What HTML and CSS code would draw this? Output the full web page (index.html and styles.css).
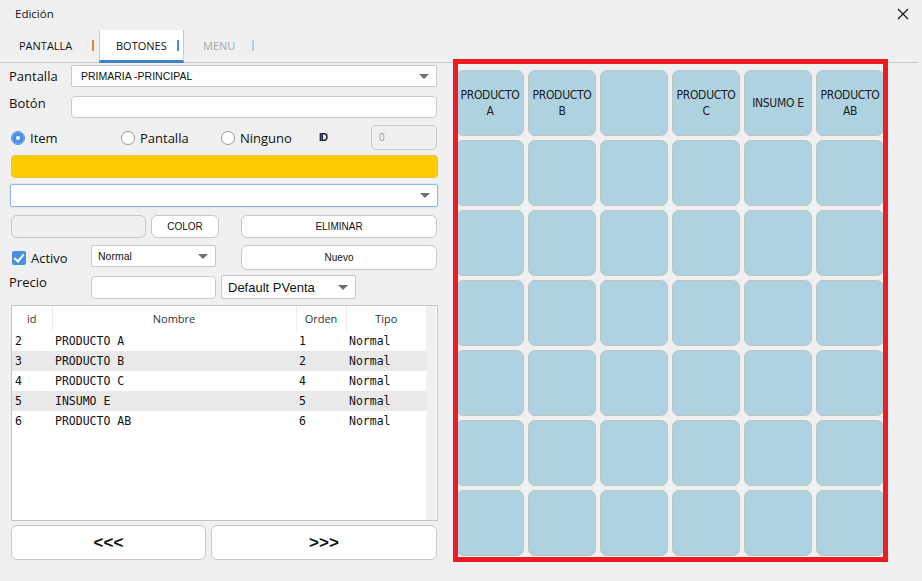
FILE: index.html
```html
<!DOCTYPE html>
<html lang="es">
<head>
  <meta charset="UTF-8">
  <title>Edición</title>
  <link rel="stylesheet" href="styles.css">
</head>
<body>

  <div class="titlebar">
    <span>Edición</span>
    <svg class="close" width="12" height="12" viewBox="0 0 12 12">
      <path d="M1 1 L11 11 M11 1 L1 11" stroke="#1a1a1a" stroke-width="1.2" fill="none"/>
    </svg>
  </div>

  <div class="tabs">
    <div class="tab tab-pantalla">PANTALLA <span class="sep sep-orange"></span></div>
    <div class="tab tab-botones active">BOTONES <span class="sep sep-blue"></span></div>
    <div class="tab tab-menu">MENU <span class="sep sep-light"></span></div>
  </div>

  <div class="main">
    <div class="form">

      <div class="row r1">
        <span class="lbl">Pantalla</span>
        <div class="select wide"><span>PRIMARIA -PRINCIPAL</span><i class="caret"></i></div>
      </div>

      <div class="row r2">
        <span class="lbl lbl-up">Botón</span>
        <div class="input wide"></div>
      </div>

      <div class="row r3">
        <label class="opt"><span class="radio on"></span>Item</label>
        <label class="opt"><span class="radio"></span>Pantalla</label>
        <label class="opt"><span class="radio"></span>Ninguno</label>
        <span class="id-lbl">ID</span>
        <div class="input id-box">0</div>
      </div>

      <div class="color-bar"></div>

      <div class="select combo"><span></span><i class="caret"></i></div>

      <div class="row r6">
        <div class="input grey-box"></div>
        <button class="btn btn-color">COLOR</button>
        <button class="btn btn-side">ELIMINAR</button>
      </div>

      <div class="row r7">
        <label class="check-wrap"><span class="check"></span>Activo</label>
        <div class="select small"><span>Normal</span><i class="caret"></i></div>
        <button class="btn btn-side tall">Nuevo</button>
      </div>

      <div class="row r8">
        <span class="lbl lbl-precio lbl-up">Precio</span>
        <div class="input small"></div>
        <div class="select price"><span>Default PVenta</span><i class="caret"></i></div>
      </div>

      <div class="table-box">
        <table class="grid-table">
          <colgroup>
            <col class="c-id"><col class="c-nom"><col class="c-ord"><col class="c-tipo">
          </colgroup>
          <thead>
            <tr><th>id</th><th>Nombre</th><th>Orden</th><th>Tipo</th></tr>
          </thead>
          <tbody>
            <tr><td>2</td><td>PRODUCTO A</td><td>1</td><td>Normal</td></tr>
            <tr class="alt"><td>3</td><td>PRODUCTO B</td><td>2</td><td>Normal</td></tr>
            <tr><td>4</td><td>PRODUCTO C</td><td>4</td><td>Normal</td></tr>
            <tr class="alt"><td>5</td><td>INSUMO E</td><td>5</td><td>Normal</td></tr>
            <tr><td>6</td><td>PRODUCTO AB</td><td>6</td><td>Normal</td></tr>
          </tbody>
        </table>
        <div class="scroll"></div>
      </div>

      <div class="row nav">
        <button class="btn nav-prev">&lt;&lt;&lt;</button>
        <button class="btn nav-next">&gt;&gt;&gt;</button>
      </div>

    </div>

    <div class="board">
      <div class="keys">
        <div class="key">PRODUCTO<br>A</div>
        <div class="key">PRODUCTO<br>B</div>
        <div class="key"></div>
        <div class="key">PRODUCTO<br>C</div>
        <div class="key">INSUMO E</div>
        <div class="key">PRODUCTO<br>AB</div>

        <div class="key"></div><div class="key"></div><div class="key"></div>
        <div class="key"></div><div class="key"></div><div class="key"></div>

        <div class="key"></div><div class="key"></div><div class="key"></div>
        <div class="key"></div><div class="key"></div><div class="key"></div>

        <div class="key"></div><div class="key"></div><div class="key"></div>
        <div class="key"></div><div class="key"></div><div class="key"></div>

        <div class="key"></div><div class="key"></div><div class="key"></div>
        <div class="key"></div><div class="key"></div><div class="key"></div>

        <div class="key"></div><div class="key"></div><div class="key"></div>
        <div class="key"></div><div class="key"></div><div class="key"></div>

        <div class="key"></div><div class="key"></div><div class="key"></div>
        <div class="key"></div><div class="key"></div><div class="key"></div>
      </div>
    </div>
  </div>

</body>
</html>
```

FILE: styles.css
```css
* {
  box-sizing: border-box;
}
body {
  margin: 0;
  width: 922px;
  height: 581px;
  overflow: hidden;
  background: #f0f0f0;
  font-family: "Open Sans", "Noto Sans", sans-serif;
  color: #111;
}

/* title + tabs */
.titlebar {
  height: 30px;
  display: flex;
  align-items: center;
  justify-content: space-between;
  padding: 0 13px 3px 15px;
  font-size: 11.5px;
}
.tabs {
  height: 33px;
  margin-right: 4px;
  display: flex;
  border-bottom: 1px solid #c9c9c9;
  font-size: 11px;
}
.tab {
  height: 32px;
  display: flex;
  align-items: center;
  justify-content: space-between;
  padding-bottom: 2px;
}
.tab-pantalla {
  width: 99px;
  padding: 0 5px 2px 19px;
}
.tab-botones {
  width: 85px;
  padding: 0 4px 0 16px;
}
.tab-menu {
  width: 76px;
  padding: 0 6px 2px 19px;
  color: #a8a8a8;
}
.tab.active {
  height: 33px;
  background: #fff;
  border-left: 1px solid #c9c9c9;
  border-right: 1px solid #c9c9c9;
  border-bottom: 3px solid #3d82c8;
  padding-top: 1px;
}
.sep {
  width: 2px;
  height: 11px;
}
.sep-orange { background: #d48a3c; }
.sep-blue { background: #4a8fd6; }
.sep-light { background: #b5cfe8; }

/* layout */
.main {
  display: flex;
  align-items: flex-start;
}
.form {
  width: 427px;
  margin-left: 11px;
  display: flex;
  flex-direction: column;
}
.row {
  display: flex;
  align-items: center;
}
.lbl {
  width: 62px;
  margin-left: -2px;
  font-size: 13px;
}
.lbl-precio {
  width: 82px;
}
.lbl-up {
  align-self: flex-start;
  margin-top: -2px;
}

/* controls */
.input {
  height: 22px;
  background: #fff;
  border: 1px solid #cbcbcb;
  border-radius: 4px;
}
.select {
  height: 22px;
  background: #fff;
  border: 1px solid #c8c8c8;
  border-radius: 2px;
  display: flex;
  align-items: center;
  justify-content: space-between;
  padding: 0 7px 0 9px;
  font-family: "Liberation Sans", Arial, sans-serif;
  font-size: 10.5px;
}
.caret {
  width: 0;
  height: 0;
  border-left: 5px solid transparent;
  border-right: 5px solid transparent;
  border-top: 5px solid #6e6e6e;
}
.wide {
  width: 366px;
}
.btn {
  height: 23px;
  background: #fff;
  border: 1px solid #c8c8c8;
  border-radius: 6px;
  font-family: "Liberation Sans", Arial, sans-serif;
  font-size: 10px;
  color: #111;
  padding: 0;
}

.r1 { margin-top: 2px; height: 22px; }
.r2 { margin-top: 9px; height: 22px; }
.r3 {
  margin-top: 7px;
  height: 25px;
  display: grid;
  grid-template-columns: 110px 100px 98px 52px 66px;
  align-items: center;
}
.opt {
  display: flex;
  align-items: center;
  gap: 5px;
  font-size: 13px;
}
.radio {
  width: 14px;
  height: 14px;
  border-radius: 50%;
  background: #fff;
  border: 1px solid #9a9a9a;
}
.radio.on {
  border-color: #4a90e2;
  box-shadow: inset 0 0 0 4px #4a90e2;
  background: #fff;
}
.id-lbl {
  font-family: "Liberation Sans", Arial, sans-serif;
  font-size: 10px;
  font-weight: bold;
  letter-spacing: -1px;
}
.id-box {
  height: 25px;
  background: #f0f0f0;
  border-radius: 5px;
  color: #9a9a9a;
  font-size: 10px;
  line-height: 23px;
  padding-left: 7px;
}

.color-bar {
  margin-top: 5px;
  height: 23px;
  background: #ffcc00;
  border: 1px solid #eac24a;
  border-radius: 4px;
}
.combo {
  margin-top: 6px;
  margin-left: -1px;
  width: 428px;
  height: 23px;
  border-color: #8fb7e2;
  box-shadow: 0 0 0 1px #dbe8f6;
}

.r6 { margin-top: 8px; height: 23px; }
.grey-box {
  width: 135px;
  height: 23px;
  background: #f0f0f0;
  border-color: #c8c8c8;
  border-radius: 6px;
}
.btn-color {
  width: 68px;
  margin-left: 5px;
}
.btn-side {
  width: 196px;
  margin-left: 22px;
}

.r7 { margin-top: 7px; height: 25px; }
.check-wrap {
  width: 80px;
  display: flex;
  align-items: center;
  gap: 5px;
  padding-left: 1px;
  padding-top: 1px;
  font-size: 13px;
}
.check {
  width: 14px;
  height: 14px;
  border-radius: 2px;
  background: #4a90e2;
  position: relative;
}
.check::after {
  content: "";
  position: absolute;
  left: 4px;
  top: 1px;
  width: 4px;
  height: 8px;
  border-right: 2px solid #fff;
  border-bottom: 2px solid #fff;
  transform: rotate(40deg);
}
.small {
  width: 125px;
}
.r7 .select {
  align-self: flex-start;
  padding-left: 6px;
}
.tall {
  height: 25px;
  margin-left: 25px;
}

.r8 { margin-top: 5px; height: 24px; }
.r8 .input {
  height: 23px;
}
.price {
  width: 135px;
  height: 24px;
  margin-left: 5px;
  font-size: 13px;
  padding-left: 6px;
}

/* table */
.table-box {
  margin-top: 6px;
  height: 216px;
  background: #fff;
  border: 1px solid #c4c4c4;
  display: flex;
}
.grid-table {
  width: 414px;
  table-layout: fixed;
  border-collapse: collapse;
  align-self: flex-start;
}
.c-id { width: 40px; }
.c-nom { width: 244px; }
.c-ord { width: 50px; }
.c-tipo { width: 80px; }
.grid-table th {
  height: 25px;
  font-weight: normal;
  font-size: 11px;
  color: #333;
  border-left: 1px solid #ececec;
}
.grid-table th:first-child {
  border-left: none;
}
.grid-table td {
  height: 20px;
  padding: 0 0 0 3px;
  font-family: "DejaVu Sans Mono", monospace;
  font-size: 11.5px;
  color: #111;
  white-space: nowrap;
}
.grid-table .alt td {
  background: #e9e9e9;
}
.scroll {
  width: 10px;
  background: #f0f0f0;
}

.nav {
  margin-top: 4px;
  height: 35px;
}
.nav .btn {
  height: 35px;
  font-size: 17px;
  font-weight: bold;
}
.nav-prev {
  width: 195px;
}
.nav-next {
  width: 226px;
  margin-left: 5px;
}

/* button board */
.board {
  width: 435px;
  height: 503px;
  margin: -4px 0 0 15px;
  border: 5px solid #ed1c24;
  overflow: hidden;
}
.keys {
  display: grid;
  grid-template-columns: repeat(6, 68px);
  grid-auto-rows: 66px;
  gap: 4px;
  margin: 6px 0 0 -2px;
}
.key {
  background: #afd2e0;
  border: 1px solid #bfc3c5;
  border-radius: 7px;
  display: flex;
  align-items: center;
  justify-content: center;
  text-align: center;
  font-family: "Liberation Sans Narrow", "DejaVu Sans Condensed", "Liberation Sans", sans-serif;
  font-size: 12px;
  line-height: 16px;
  letter-spacing: -0.3px;
  color: #1c1c1c;
}
```
